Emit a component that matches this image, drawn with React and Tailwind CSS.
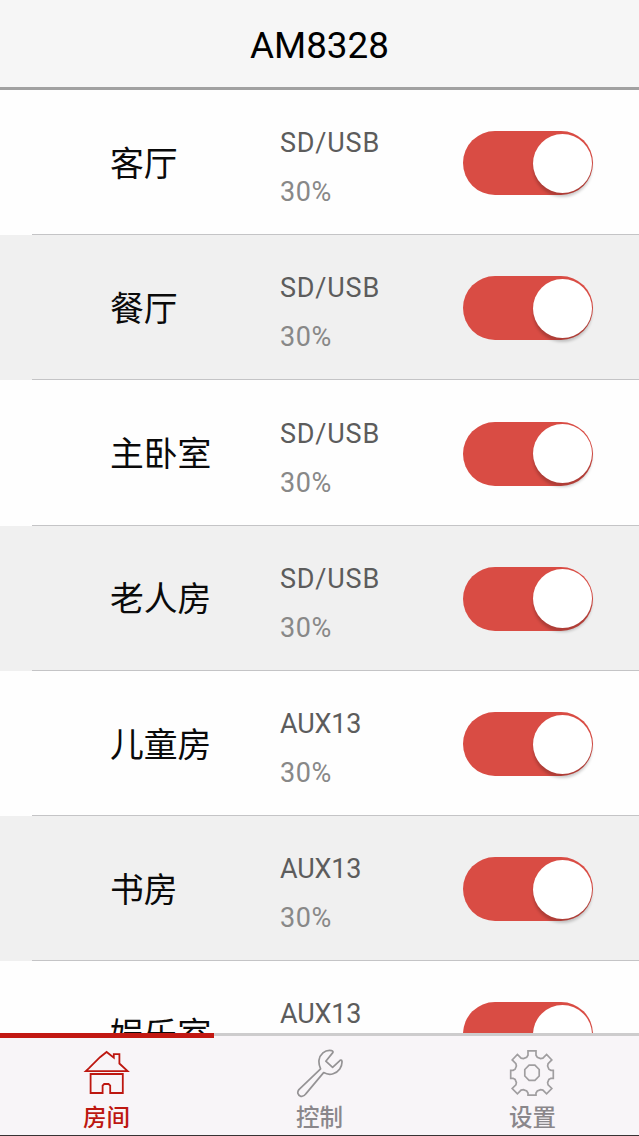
import React from "react";

const rooms = [
  { name: "客厅", source: "SD/USB", volume: "30%" },
  { name: "餐厅", source: "SD/USB", volume: "30%" },
  { name: "主卧室", source: "SD/USB", volume: "30%" },
  { name: "老人房", source: "SD/USB", volume: "30%" },
  { name: "儿童房", source: "AUX13", volume: "30%" },
  { name: "书房", source: "AUX13", volume: "30%" },
  { name: "娱乐室", source: "AUX13", volume: "30%" },
];

function Toggle() {
  return (
    <button
      type="button"
      role="switch"
      aria-checked="true"
      className="mr-[46px] flex h-[64px] w-[130px] shrink-0 items-center justify-end rounded-full bg-[#d94c44] pr-[1.5px]"
    >
      <span className="h-[59px] w-[59px] rounded-full bg-white shadow-[0_4px_3px_rgba(0,0,0,0.2)]" />
    </button>
  );
}

function RoomRow({ room, shaded }) {
  return (
    <li className={shaded ? "h-[145.2px] shrink-0 bg-[#f0f0f0]" : "h-[145.2px] shrink-0 bg-[#fefefe]"}>
      <div className="flex h-full flex-col">
        <div className="flex flex-1 items-center pt-[2.4px]">
          <div className="w-[280px] pt-[3px] pl-[110px] text-[33.8px] leading-[48px] text-[#0a0a0a]">{room.name}</div>
          <div className="flex-1 pt-[10px] text-[27px] leading-[49px]">
            <div className={room.source.includes("/") ? "tracking-[0.8px] text-[#5c5c5c]" : "tracking-[-0.2px] text-[#5c5c5c]"}>{room.source}</div>
            <div className="tracking-[0.6px] text-[#888]">{room.volume}</div>
          </div>
          <Toggle />
        </div>
        <div className="ml-[32px] h-px shrink-0 bg-[#c4c4c6]" />
      </div>
    </li>
  );
}

function HomeIcon() {
  return (
    <svg width="48" height="50" viewBox="0 0 48 50" fill="none" stroke="currentColor" strokeWidth="1.8">
      <path d="M3.8 23.2 7 20.2 18 9.2 24.6 4l7.2 5.6V6.2h5.6v9.3l8.2 7.7Z" />
      <path d="M8.6 26v19h12v-7.4l1.6-1.6h4.4l1.6 1.6V45h12.6V26Z" />
    </svg>
  );
}

function WrenchIcon() {
  return (
    <svg width="48" height="50" viewBox="0 0 48 50" fill="none" stroke="#959395" strokeWidth="1.7" strokeLinejoin="round">
      <path d="M36.6 2.6C29.5 1.4 24.8 6.7 24 12.2c-.3 3 .2 5.7 1.6 8.6L3.9 41.6c-2 2.4-1.2 6 1.9 6.7 2.2.5 3.8-.6 5-2.4L28.6 24.6c3.4 1.8 6.5 2.2 9.5 1.1 5.6-1.6 9.2-7 8.9-12.3-.2-1.5-1.6-1.6-2.4-.6l-7 6.6-6.8-6.2 7-8.6c.5-.9 0-1.8-1.2-2Z" />
    </svg>
  );
}

function GearIcon() {
  return (
    <svg width="48" height="50" viewBox="0 0 48 50" fill="none" stroke="#a09ea0" strokeWidth="1.7">
      <path d="M20 2.9h8v4.4l1.3 2 3.3 1.3 2.3-.4 3.7-3.7 5.2 5.4-3.7 3.8-.5 2.3 1.3 3.2 2 1.1h2.4v8h-2.4l-2 1.1-1.3 3.2.5 2.3 3.7 3.6-5.2 5.4-3.7-3.8-2.3-.4-3.3 1.3-1.3 2v2.1h-8v-2.1l-1.3-2-3.3-1.3-2.3.4-3.7 3.8-5.2-5.4 3.7-3.6.5-2.3-1.3-3.2-2-1.1H2.7v-8h2.4l2-1.1 1.3-3.2-.5-2.3-3.7-3.8 5.2-5.4 3.7 3.7 2.3.4 3.3-1.3 1.3-2Z" />
      <path d="M21.1 17.2h5.8l4.3 4.3V28l-4.3 4.3h-5.8L16.8 28v-6.5Z" />
    </svg>
  );
}

function Tab({ icon, label, active }) {
  return (
    <button
      type="button"
      className={active ? "flex flex-1 flex-col items-center pt-[12px] text-[#bd1710]" : "flex flex-1 flex-col items-center pt-[12px] text-[#8a878b]"}
    >
      <span className="h-[50px] pr-[2px]">{icon}</span>
      <span className="mt-[4px] text-[23.5px] leading-[33px] font-medium">{label}</span>
    </button>
  );
}

export default function App() {
  return (
    <div className="flex h-[1136px] w-[639px] flex-col overflow-hidden bg-white font-['Roboto','Noto_Sans_CJK_SC',sans-serif]">
      <header className="flex h-[90px] shrink-0 items-center justify-center border-b-[3px] border-[#a1a1a1] bg-[#f6f6f6] pt-[4px] text-[36.8px] text-black">
        <h1>AM8328</h1>
      </header>
      <ul className="flex h-[943px] shrink-0 flex-col overflow-hidden">
        {rooms.map((room, i) => (
          <RoomRow key={room.name} room={room} shaded={i % 2 === 1} />
        ))}
      </ul>
      <nav className="relative flex h-[103px] shrink-0 border-t-[3px] border-b border-t-[#cdcccd] border-b-[#383234] bg-[#f8f5f8]">
        <div className="absolute -top-[3px] left-0 h-[5px] w-[214px] bg-[#c21812]" />
        <Tab icon={<HomeIcon />} label="房间" active />
        <Tab icon={<WrenchIcon />} label="控制" />
        <Tab icon={<GearIcon />} label="设置" />
      </nav>
    </div>
  );
}
